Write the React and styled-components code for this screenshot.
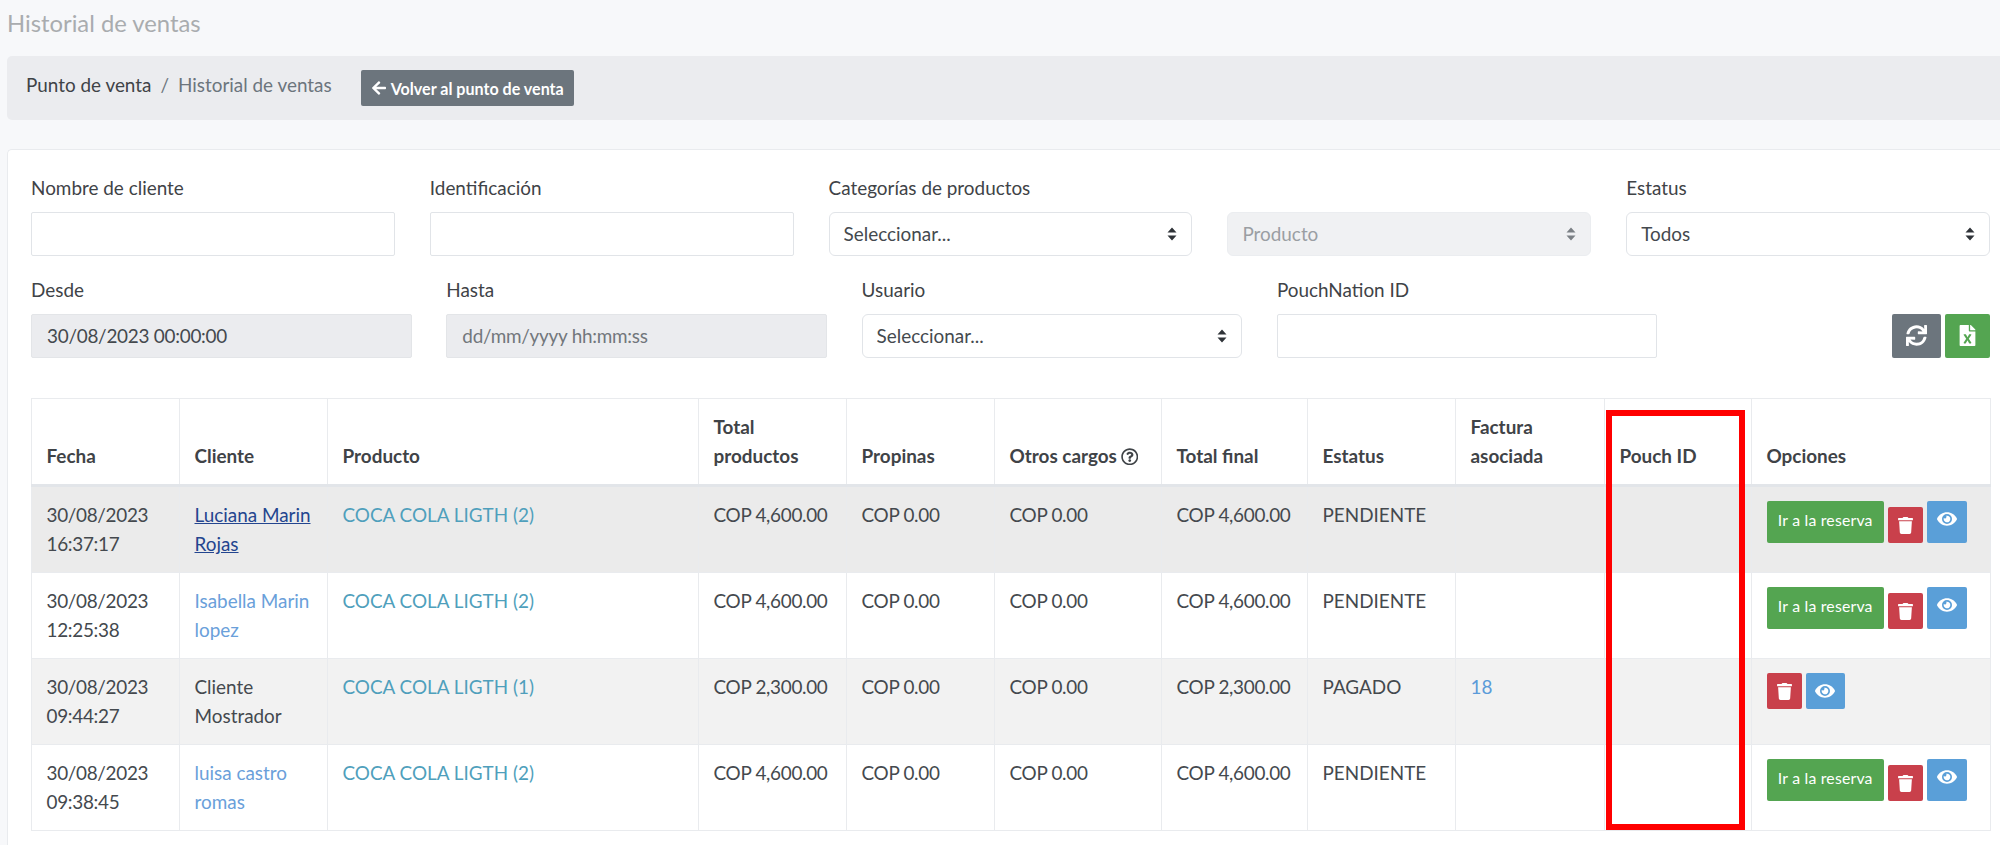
import React from "react";
import styled, { createGlobalStyle } from "styled-components";
import { FaArrowLeft, FaSync, FaFileExcel, FaTrash, FaEye, FaRegQuestionCircle } from "react-icons/fa";

const Global = createGlobalStyle`
  html, body { margin: 0; padding: 0; height: 845px; overflow: hidden; background: #f7f8fa; }
  body { font-family: Lato, "Open Sans", sans-serif; font-size: 18.9px; line-height: 28.7px; color: #44494e; }
  * { box-sizing: border-box; }
`;

const Page = styled.div`
  height: 845px;
  width: 2000px;
  padding: 9px 0 0 7px;
  overflow: hidden;
`;
const Title = styled.h1`
  margin: 0 0 18px;
  font-size: 23.8px;
  line-height: 29px;
  font-weight: 400;
  color: #a9acaf;
`;
const BreadcrumbBar = styled.nav`
  display: flex;
  align-items: flex-start;
  height: 64px;
  padding: 15px 0 0 19px;
  background: #ebecef;
  border-radius: 5px 0 0 5px;
  margin-bottom: 29px;
`;
const Crumb = styled.span`
  color: #3f4347;
`;
const CrumbSep = styled.span`
  color: #6c757d;
  padding: 0 9px;
`;
const CrumbCurrent = styled.span`
  color: #6c757d;
`;
const BackButton = styled.button`
  display: inline-flex;
  align-items: center;
  gap: 4px;
  height: 36px;
  margin: -1px 0 0 29px;
  padding: 0 10px;
  border: 0;
  border-radius: 2px;
  background: #6c757d;
  color: #fff;
  font: 700 16.1px Lato, sans-serif;
  svg { font-size: 16px; }
`;
const Card = styled.section`
  height: 700px;
  padding: 24px 10px 0 23px;
  background: #fff;
  border: 1px solid #e9ebee;
  border-right: 0;
  border-radius: 5px 0 0 0;
`;
const FilterRowTop = styled.div`
  display: grid;
  grid-template-columns: repeat(5, 1fr);
  column-gap: 35px;
  margin-bottom: 20px;
`;
const FilterRowBottom = styled.div`
  display: grid;
  grid-template-columns: repeat(4, 380.5px) 1fr;
  column-gap: 34.8px;
  margin-bottom: 40px;
`;
const Field = styled.div`
  display: flex;
  flex-direction: column;
`;
const Label = styled.label`
  min-height: 29px;
  margin-bottom: 8.5px;
  color: #3f4347;
`;
const TextInput = styled.input`
  width: 100%;
  height: 44.5px;
  padding: 0 15px 1px;
  border: 1.3px solid ${(p) => (p.readOnly ? "#e3e5e8" : "#e1e4e8")};
  border-radius: 2px;
  background: ${(p) => (p.readOnly ? "#ebecef" : "#fff")};
  color: #44494e;
  font: 400 18.9px Lato, sans-serif;
  letter-spacing: -0.25px;
  outline: none;
  &::placeholder { color: #72777c; opacity: 1; }
`;
const SelectBox = styled.div`
  position: relative;
  height: 44.5px;
`;
const NativeSelect = styled.select`
  width: 100%;
  height: 100%;
  padding: 0 34px 1px 14px;
  appearance: none;
  border: 1.3px solid ${(p) => (p.disabled ? "#ebedf0" : "#e1e4e8")};
  border-radius: 6px;
  background: ${(p) => (p.disabled ? "#f0f1f3" : "#fff")};
  color: ${(p) => (p.disabled ? "#9a9ea3" : "#44494e")};
  font: 400 18.9px Lato, sans-serif;
  opacity: 1;
`;
const CaretIcon = styled.svg`
  position: absolute;
  right: 15px;
  top: 15px;
  width: 10px;
  height: 14px;
  fill: ${(p) => (p.$muted ? "#7b8085" : "#2f3338")};
`;
const ActionSlot = styled.div`
  display: flex;
  justify-content: flex-end;
  align-items: flex-end;
  gap: 4px;
`;
const SquareButton = styled.button`
  display: flex;
  align-items: center;
  justify-content: center;
  width: ${(p) => p.$w}px;
  height: 44.5px;
  padding: 0;
  border: 0;
  border-radius: 2px;
  background: ${(p) => p.$bg};
  color: #fff;
  font-size: 21px;
`;
const TableWrap = styled.div`
  position: relative;
  width: 1959px;
`;
const Table = styled.table`
  width: 1959px;
  border-collapse: collapse;
  table-layout: fixed;
`;
const Col = styled.col`
  width: ${(p) => p.$w}px;
`;
const Th = styled.th`
  padding: 14px 15px 13.5px 14.5px;
  border: 1px solid #e9ebee;
  border-bottom: 3px solid #e2e5e9;
  background: #fff;
  color: #3f4347;
  font-weight: 700;
  text-align: left;
  vertical-align: bottom;
`;
const QuestionIcon = styled(FaRegQuestionCircle)`
  font-size: 17.5px;
  vertical-align: -2.5px;
  margin-left: 4px;
`;
const Tr = styled.tr`
  background: ${(p) => p.$bg};
`;
const Td = styled.td`
  padding: 14.5px 15px 13px 14.5px;
  border: 1px solid #e9ebee;
  vertical-align: top;
`;
const NumericTd = styled(Td)`
  letter-spacing: -0.3px;
  white-space: nowrap;
`;
const ClientLink = styled.a`
  color: ${(p) => (p.$hover ? "#23458f" : "#6aa0da")};
  text-decoration: ${(p) => (p.$hover ? "underline" : "none")};
`;
const ProductLink = styled.a`
  color: #4f9fbc;
`;
const InvoiceLink = styled.a`
  color: #5b9bd9;
`;
const OptionGroup = styled.div`
  display: flex;
  align-items: flex-end;
  gap: 4px;
`;
const ReserveButton = styled.button`
  width: 117.5px;
  height: 42px;
  padding: 0 0 5px;
  border: 0;
  border-radius: 2px;
  background: #54a551;
  color: #fff;
  font: 400 15.8px Lato, sans-serif;
  letter-spacing: 0.2px;
`;
const DeleteButton = styled.button`
  display: flex;
  align-items: center;
  justify-content: center;
  width: 35px;
  height: 36px;
  padding: 0;
  border: 0;
  border-radius: 2px;
  background: #c9404b;
  color: #fff;
  font-size: 17px;
`;
const ViewButton = styled.button`
  display: flex;
  align-items: ${(p) => (p.$tall ? "flex-start" : "center")};
  justify-content: center;
  width: 39.5px;
  height: ${(p) => (p.$tall ? 42 : 36)}px;
  padding: ${(p) => (p.$tall ? "8px 0 0" : "0")};
  border: 0;
  border-radius: 2px;
  background: #5a9fd8;
  color: #fff;
  font-size: 20px;
`;
const Highlight = styled.div`
  position: absolute;
  left: 1575px;
  top: 12px;
  width: 139px;
  height: 420px;
  border: 6px solid #ff0000;
  pointer-events: none;
`;

const Caret = ({ muted }) => (
  <CaretIcon viewBox="0 0 10 14" $muted={muted}>
    <path d="M5 0.5 9.5 5.5H0.5zM5 13.5 0.5 8.5H9.5z" />
  </CaretIcon>
);

const Select = ({ children, disabled }) => (
  <SelectBox>
    <NativeSelect disabled={disabled} defaultValue={children}>
      <option>{children}</option>
    </NativeSelect>
    <Caret muted={disabled} />
  </SelectBox>
);

const widths = [148, 148, 371, 148, 148, 167, 146, 148, 149, 147, 239];
const headers = [
  "Fecha",
  "Cliente",
  "Producto",
  "Total productos",
  "Propinas",
  <>Otros cargos<QuestionIcon /></>,
  "Total final",
  "Estatus",
  "Factura asociada",
  "Pouch ID",
  "Opciones",
];
const rows = [
  { d: "30/08/2023", h: "16:37:17", c: "Luciana Marin Rojas", link: true, hover: true, p: "COCA COLA LIGTH (2)", t: "COP 4,600.00", s: "PENDIENTE", reserve: true, bg: "#ebebeb" },
  { d: "30/08/2023", h: "12:25:38", c: "Isabella Marin lopez", link: true, p: "COCA COLA LIGTH (2)", t: "COP 4,600.00", s: "PENDIENTE", reserve: true, bg: "#fff" },
  { d: "30/08/2023", h: "09:44:27", c: "Cliente Mostrador", p: "COCA COLA LIGTH (1)", t: "COP 2,300.00", s: "PAGADO", inv: "18", bg: "#f2f2f2" },
  { d: "30/08/2023", h: "09:38:45", c: "luisa castro romas", link: true, p: "COCA COLA LIGTH (2)", t: "COP 4,600.00", s: "PENDIENTE", reserve: true, bg: "#fff" },
];

export default function App() {
  return (
    <>
      <Global />
      <Page>
        <Title>Historial de ventas</Title>
        <BreadcrumbBar>
          <Crumb>Punto de venta</Crumb>
          <CrumbSep>/</CrumbSep>
          <CrumbCurrent>Historial de ventas</CrumbCurrent>
          <BackButton><FaArrowLeft />Volver al punto de venta</BackButton>
        </BreadcrumbBar>
        <Card>
          <FilterRowTop>
            <Field><Label>Nombre de cliente</Label><TextInput /></Field>
            <Field><Label>Identificación</Label><TextInput /></Field>
            <Field><Label>Categorías de productos</Label><Select>Seleccionar...</Select></Field>
            <Field><Label /><Select disabled>Producto</Select></Field>
            <Field><Label>Estatus</Label><Select>Todos</Select></Field>
          </FilterRowTop>
          <FilterRowBottom>
            <Field><Label>Desde</Label><TextInput readOnly value="30/08/2023 00:00:00" /></Field>
            <Field><Label>Hasta</Label><TextInput readOnly placeholder="dd/mm/yyyy hh:mm:ss" /></Field>
            <Field><Label>Usuario</Label><Select>Seleccionar...</Select></Field>
            <Field><Label>PouchNation ID</Label><TextInput /></Field>
            <ActionSlot>
              <SquareButton $w={49} $bg="#6c757d"><FaSync /></SquareButton>
              <SquareButton $w={45} $bg="#54a551"><FaFileExcel /></SquareButton>
            </ActionSlot>
          </FilterRowBottom>
          <TableWrap>
            <Table>
              <colgroup>{widths.map((w, i) => <Col key={i} $w={w} />)}</colgroup>
              <thead>
                <tr>{headers.map((h, i) => <Th key={i}>{h}</Th>)}</tr>
              </thead>
              <tbody>
                {rows.map((r, i) => (
                  <Tr key={i} $bg={r.bg}>
                    <NumericTd>{r.d}<br />{r.h}</NumericTd>
                    <Td>{r.link ? <ClientLink $hover={r.hover}>{r.c}</ClientLink> : r.c}</Td>
                    <Td><ProductLink>{r.p}</ProductLink></Td>
                    <NumericTd>{r.t}</NumericTd>
                    <NumericTd>COP 0.00</NumericTd>
                    <NumericTd>COP 0.00</NumericTd>
                    <NumericTd>{r.t}</NumericTd>
                    <Td>{r.s}</Td>
                    <Td>{r.inv && <InvoiceLink>{r.inv}</InvoiceLink>}</Td>
                    <Td />
                    <Td>
                      <OptionGroup>
                        {r.reserve && <ReserveButton>Ir a la reserva</ReserveButton>}
                        <DeleteButton><FaTrash /></DeleteButton>
                        <ViewButton $tall={r.reserve}><FaEye /></ViewButton>
                      </OptionGroup>
                    </Td>
                  </Tr>
                ))}
              </tbody>
            </Table>
            <Highlight />
          </TableWrap>
        </Card>
      </Page>
    </>
  );
}
